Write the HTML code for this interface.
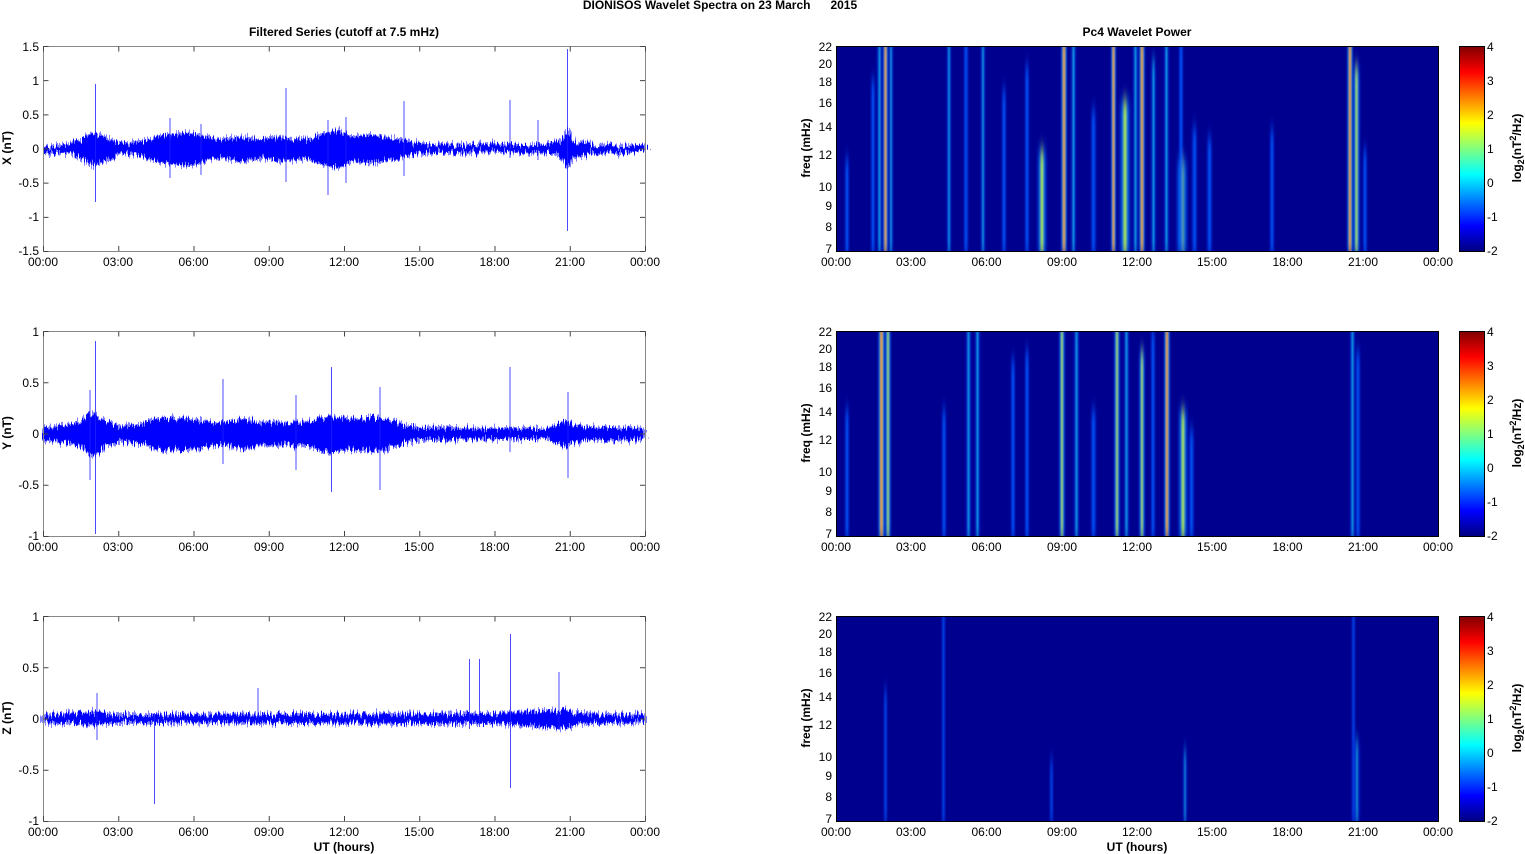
<!DOCTYPE html>
<html><head><meta charset="utf-8"><style>
body{margin:0;width:1525px;height:854px;background:#fff;overflow:hidden}
svg{display:block;font-family:"Liberation Sans",Arial,sans-serif;font-size:12px}
.b{font-weight:bold}
</style></head><body>
<svg width="1525" height="854" viewBox="0 0 1525 854" xmlns="http://www.w3.org/2000/svg">
<defs>
<filter id="jag" x="-2%" y="-60%" width="104%" height="220%">
<feTurbulence type="fractalNoise" baseFrequency="0.9 0.03" numOctaves="2" seed="3"/>
<feDisplacementMap in="SourceGraphic" scale="16" xChannelSelector="A" yChannelSelector="R"/>
</filter>
<filter id="bl" x="-50%" y="-20%" width="200%" height="140%"><feGaussianBlur stdDeviation="0.8 8"/></filter>
<linearGradient id="gC"><stop offset="0" stop-color="#0030ff" stop-opacity="0"/><stop offset=".35" stop-color="#0060ff" stop-opacity=".6"/><stop offset=".5" stop-color="#20e0e0"/><stop offset=".65" stop-color="#0060ff" stop-opacity=".6"/><stop offset="1" stop-color="#0030ff" stop-opacity="0"/></linearGradient>
<linearGradient id="gY"><stop offset="0" stop-color="#0030ff" stop-opacity="0"/><stop offset=".3" stop-color="#0090ff" stop-opacity=".7"/><stop offset=".5" stop-color="#d0ff30"/><stop offset=".7" stop-color="#0090ff" stop-opacity=".7"/><stop offset="1" stop-color="#0030ff" stop-opacity="0"/></linearGradient>
<linearGradient id="gR"><stop offset="0" stop-color="#0030ff" stop-opacity="0"/><stop offset=".3" stop-color="#10b0ff" stop-opacity=".7"/><stop offset=".44" stop-color="#ffd000"/><stop offset=".5" stop-color="#ff2000"/><stop offset=".56" stop-color="#ffd000"/><stop offset=".7" stop-color="#10b0ff" stop-opacity=".7"/><stop offset="1" stop-color="#0030ff" stop-opacity="0"/></linearGradient>
<linearGradient id="gB"><stop offset="0" stop-color="#0030ff" stop-opacity="0"/><stop offset=".5" stop-color="#0060ff"/><stop offset="1" stop-color="#0030ff" stop-opacity="0"/></linearGradient>
<linearGradient id="jet" x1="0" y1="0" x2="0" y2="1"><stop offset="0" stop-color="#800000"/><stop offset=".125" stop-color="#ff0000"/><stop offset=".375" stop-color="#ffff00"/><stop offset=".625" stop-color="#00ffff"/><stop offset=".875" stop-color="#0000ff"/><stop offset="1" stop-color="#000080"/></linearGradient>
<clipPath id="c1"><rect x="836" y="46" width="603" height="205"/></clipPath>
<clipPath id="c2"><rect x="836" y="331" width="603" height="205"/></clipPath>
<clipPath id="c3"><rect x="836" y="616" width="603" height="205"/></clipPath>
</defs>

<text x="720" y="9" text-anchor="middle" class="b" xml:space="preserve">DIONISOS Wavelet Spectra on 23 March      2015</text>
<text x="344" y="36" text-anchor="middle" class="b">Filtered Series (cutoff at 7.5 mHz)</text>
<text x="1137" y="36" text-anchor="middle" class="b">Pc4 Wavelet Power</text>

<!-- ===== Time series panel 1 ===== -->
<g fill="#0000ff" filter="url(#jag)">
<polygon points="43,145.5 68,144.5 80.6,138.5 93.2,132.5 105.7,136.5 118.3,143.5 135.8,142.5 155.9,136.5 168.4,134.5 188.5,132.5 206,136.5 218.6,139.5 243.7,136.5 258.7,139.5 281.3,136.5 306.4,139.5 326.4,132.5 339,130.5 351.5,136.5 369.1,134.5 384.1,136.5 404.2,140.5 419.3,143.5 444.3,144.5 544.7,144.5 562.2,140.5 567.2,128.5 574.8,140.5 594.8,144.5 645,145.5 645,151.8 594.8,152.9 574.8,157.3 567.2,170.5 562.2,157.3 544.7,152.9 444.3,152.9 419.3,154 404.2,157.3 384.1,161.7 369.1,163.9 351.5,161.7 339,168.3 326.4,166.1 306.4,158.4 281.3,161.7 258.7,158.4 243.7,161.7 218.6,158.4 206,161.7 188.5,166.1 168.4,163.9 155.9,161.7 135.8,155.1 118.3,154 105.7,161.7 93.2,166.1 80.6,159.5 68,152.9 43,151.8"/>
</g>
<g stroke="#2020ff" stroke-width="1" opacity=".8">
<line x1="95.5" y1="84" x2="95.5" y2="202"/><line x1="286" y1="88" x2="286" y2="182"/><line x1="328" y1="120" x2="328" y2="195"/><line x1="510" y1="100" x2="510" y2="158"/><line x1="567.5" y1="49" x2="567.5" y2="231"/><line x1="404" y1="101" x2="404" y2="176"/><line x1="346" y1="117" x2="346" y2="183"/><line x1="170" y1="118" x2="170" y2="178"/><line x1="201" y1="124" x2="201" y2="175"/><line x1="538" y1="120" x2="538" y2="160"/>
</g>
<rect x="43.5" y="46.5" width="602" height="205" fill="none" stroke="#888"/>

<!-- ===== Time series panel 2 ===== -->
<g fill="#0000ff" filter="url(#jag)">
<polygon points="43,427.5 68,425.5 83.1,419.5 93.2,411.5 103.2,419.5 118.3,425.5 143.3,423.5 155.9,419.5 181,417.5 198.5,419.5 218.6,423.5 243.7,419.5 261.2,421.5 281.3,423.5 306.4,421.5 331.5,415.5 344,419.5 369.1,417.5 384.1,417.5 401.7,423.5 419.3,427.5 494.5,428.5 544.7,428.5 567.2,421.5 577.3,426.5 645,428.5 645,439 577.3,441.2 567.2,446.7 544.7,439 494.5,439 419.3,440.1 401.7,444.5 384.1,451.1 369.1,451.1 344,448.9 331.5,453.3 306.4,446.7 281.3,444.5 261.2,446.7 243.7,448.9 218.6,444.5 198.5,448.9 181,451.1 155.9,448.9 143.3,444.5 118.3,442.3 103.2,448.9 93.2,457.7 83.1,448.9 68,442.3 43,440.1"/>
</g>
<g stroke="#2020ff" opacity=".8">
<line x1="95.5" y1="341" x2="95.5" y2="534"/><line x1="331.5" y1="367" x2="331.5" y2="492"/><line x1="380" y1="387" x2="380" y2="490"/><line x1="510" y1="367" x2="510" y2="452"/><line x1="223" y1="379" x2="223" y2="464"/><line x1="90" y1="390" x2="90" y2="480"/><line x1="568" y1="392" x2="568" y2="478"/><line x1="296" y1="395" x2="296" y2="470"/>
</g>
<rect x="43.5" y="331.5" width="602" height="205" fill="none" stroke="#888"/>

<!-- ===== Time series panel 3 ===== -->
<g fill="#0000ff" filter="url(#jag)">
<polygon points="43,714.5 93.2,711.5 118.3,714.5 469.4,713.5 494.5,713.5 567.2,709.5 577.3,713.5 645,714.5 645,723 577.3,724 567.2,729 494.5,724 469.4,724 118.3,723 93.2,725 43,723"/>
</g>
<g stroke="#2020ff" opacity=".8">
<line x1="154.5" y1="713" x2="154.5" y2="804"/><line x1="469.5" y1="659" x2="469.5" y2="729"/><line x1="479.5" y1="659" x2="479.5" y2="727"/><line x1="510.5" y1="634" x2="510.5" y2="788"/><line x1="559" y1="672" x2="559" y2="729"/><line x1="258" y1="688" x2="258" y2="724"/><line x1="97" y1="693" x2="97" y2="740"/>
</g>
<rect x="43.5" y="616.5" width="602" height="205" fill="none" stroke="#888"/>

<!-- ticks left -->
<g stroke="#444" fill="none">
<line x1="43" y1="248.5" x2="646" y2="248.5" stroke-width="5" stroke-dasharray="1 74.25"/>
<line x1="43" y1="49" x2="646" y2="49" stroke-width="5" stroke-dasharray="1 74.25"/>
<line x1="43" y1="533.5" x2="646" y2="533.5" stroke-width="5" stroke-dasharray="1 74.25"/>
<line x1="43" y1="334" x2="646" y2="334" stroke-width="5" stroke-dasharray="1 74.25"/>
<line x1="43" y1="818.5" x2="646" y2="818.5" stroke-width="5" stroke-dasharray="1 74.25"/>
<line x1="43" y1="619" x2="646" y2="619" stroke-width="5" stroke-dasharray="1 74.25"/>
<line x1="46" y1="46" x2="46" y2="252" stroke-width="5" stroke-dasharray="1 33.17"/>
<line x1="642.5" y1="46" x2="642.5" y2="252" stroke-width="5" stroke-dasharray="1 33.17"/>
<line x1="46" y1="331" x2="46" y2="537" stroke-width="5" stroke-dasharray="1 50.25"/>
<line x1="642.5" y1="331" x2="642.5" y2="537" stroke-width="5" stroke-dasharray="1 50.25"/>
<line x1="46" y1="616" x2="46" y2="822" stroke-width="5" stroke-dasharray="1 50.25"/>
<line x1="642.5" y1="616" x2="642.5" y2="822" stroke-width="5" stroke-dasharray="1 50.25"/>
</g>
<g text-anchor="end">
<text x="39" y="51">1.5</text><text x="39" y="85">1</text><text x="39" y="119">0.5</text><text x="39" y="153">0</text><text x="39" y="187">-0.5</text><text x="39" y="221">-1</text><text x="39" y="255">-1.5</text>
<text x="39" y="336">1</text><text x="39" y="387">0.5</text><text x="39" y="438">0</text><text x="39" y="489">-0.5</text><text x="39" y="540">-1</text>
<text x="39" y="621">1</text><text x="39" y="672">0.5</text><text x="39" y="723">0</text><text x="39" y="774">-0.5</text><text x="39" y="825">-1</text>
</g>
<g text-anchor="middle">
<g id="xl1"><text x="43" y="266">00:00</text><text x="118" y="266">03:00</text><text x="193.5" y="266">06:00</text><text x="269" y="266">09:00</text><text x="344" y="266">12:00</text><text x="419" y="266">15:00</text><text x="494.5" y="266">18:00</text><text x="570" y="266">21:00</text><text x="645" y="266">00:00</text></g>
<use href="#xl1" y="285"/><use href="#xl1" y="570"/>
<use href="#xl1" x="793"/><use href="#xl1" x="793" y="285"/><use href="#xl1" x="793" y="570"/>
</g>
<g class="b" text-anchor="middle">
<text transform="translate(11,148) rotate(-90)">X (nT)</text>
<text transform="translate(11,433) rotate(-90)">Y (nT)</text>
<text transform="translate(11,718) rotate(-90)">Z (nT)</text>
<text transform="translate(810,148) rotate(-90)">freq (mHz)</text>
<text transform="translate(810,433) rotate(-90)">freq (mHz)</text>
<text transform="translate(810,718) rotate(-90)">freq (mHz)</text>
<text x="344" y="851">UT (hours)</text><text x="1137" y="851">UT (hours)</text>
</g>

<!-- ===== Spectrogram 1 ===== -->
<rect x="836" y="46" width="603" height="205" fill="#00008f"/>
<g clip-path="url(#c1)"><g filter="url(#bl)">
<rect x="844" y="159" width="6" height="100" fill="url(#gB)"/>
<rect x="876" y="36" width="7" height="220" fill="url(#gC)"/>
<rect x="882" y="36" width="7" height="220" fill="url(#gR)"/>
<rect x="888" y="36" width="6" height="220" fill="url(#gC)"/>
<rect x="946" y="36" width="6" height="220" fill="url(#gC)"/>
<rect x="963" y="36" width="6" height="220" fill="url(#gB)"/>
<rect x="980" y="36" width="6" height="220" fill="url(#gC)"/>
<rect x="1024" y="66" width="6" height="190" fill="url(#gB)"/>
<rect x="1036" y="150" width="12" height="106" fill="url(#gY)"/>
<rect x="1060" y="36" width="8" height="220" fill="url(#gR)"/>
<rect x="1070" y="36" width="7" height="220" fill="url(#gC)"/>
<rect x="1110" y="36" width="7" height="220" fill="url(#gR)"/>
<rect x="1118" y="100" width="14" height="156" fill="url(#gY)"/>
<rect x="1132" y="36" width="7" height="220" fill="url(#gC)"/>
<rect x="1138" y="36" width="8" height="220" fill="url(#gR)"/>
<rect x="1163" y="36" width="7" height="220" fill="url(#gC)"/>
<rect x="1175" y="160" width="14" height="96" fill="url(#gY)"/>
<rect x="1191" y="128" width="7" height="128" fill="url(#gB)"/>
<rect x="1206" y="138" width="7" height="118" fill="url(#gB)"/>
<rect x="1269" y="130" width="6" height="126" fill="url(#gB)"/>
<rect x="1346" y="36" width="8" height="220" fill="url(#gR)"/>
<rect x="1352" y="66" width="9" height="190" fill="url(#gY)"/>
<rect x="1362" y="150" width="6" height="106" fill="url(#gB)"/>
<rect x="870" y="80" width="6" height="176" fill="url(#gB)"/>
<rect x="1001" y="90" width="6" height="166" fill="url(#gB)"/>
<rect x="1090" y="110" width="7" height="146" fill="url(#gB)"/>
<rect x="1150" y="60" width="7" height="196" fill="url(#gC)"/>
<rect x="1178" y="36" width="6" height="220" fill="url(#gB)"/>
</g></g>
<rect x="836.5" y="46.5" width="602" height="205" fill="none" stroke="#000"/>

<!-- ===== Spectrogram 2 ===== -->
<rect x="836" y="331" width="603" height="205" fill="#00008f"/>
<g clip-path="url(#c2)"><g filter="url(#bl)">
<rect x="844" y="410" width="6" height="130" fill="url(#gB)"/>
<rect x="877" y="321" width="9" height="220" fill="url(#gR)"/>
<rect x="884" y="321" width="8" height="220" fill="url(#gY)"/>
<rect x="941" y="410" width="6" height="130" fill="url(#gB)"/>
<rect x="965" y="321" width="7" height="220" fill="url(#gC)"/>
<rect x="974" y="321" width="7" height="220" fill="url(#gC)"/>
<rect x="1024" y="351" width="6" height="190" fill="url(#gB)"/>
<rect x="1058" y="321" width="8" height="220" fill="url(#gY)"/>
<rect x="1073" y="321" width="7" height="220" fill="url(#gC)"/>
<rect x="1090" y="410" width="7" height="130" fill="url(#gB)"/>
<rect x="1113" y="321" width="8" height="220" fill="url(#gY)"/>
<rect x="1123" y="321" width="7" height="220" fill="url(#gC)"/>
<rect x="1138" y="351" width="8" height="190" fill="url(#gY)"/>
<rect x="1163" y="321" width="8" height="220" fill="url(#gR)"/>
<rect x="1177" y="410" width="12" height="130" fill="url(#gY)"/>
<rect x="1188" y="430" width="7" height="110" fill="url(#gB)"/>
<rect x="1349" y="321" width="7" height="220" fill="url(#gC)"/>
<rect x="1355" y="351" width="6" height="190" fill="url(#gB)"/>
<rect x="1010" y="360" width="6" height="180" fill="url(#gB)"/>
<rect x="1150" y="330" width="6" height="210" fill="url(#gB)"/>
</g></g>
<rect x="836.5" y="331.5" width="602" height="205" fill="none" stroke="#000"/>

<!-- ===== Spectrogram 3 ===== -->
<rect x="836" y="616" width="603" height="205" fill="#00008f"/>
<g clip-path="url(#c3)"><g filter="url(#bl)" opacity=".85">
<rect x="883" y="690" width="5" height="135" fill="url(#gB)"/>
<rect x="941" y="606" width="5" height="220" fill="url(#gB)"/>
<rect x="1049" y="760" width="5" height="65" fill="url(#gB)"/>
<rect x="1182" y="750" width="6" height="75" fill="url(#gC)"/>
<rect x="1351" y="606" width="5" height="220" fill="url(#gB)"/>
<rect x="1353" y="740" width="8" height="85" fill="url(#gC)"/>
</g></g>
<rect x="836.5" y="616.5" width="602" height="205" fill="none" stroke="#000"/>

<!-- freq labels -->
<g text-anchor="end" id="fl1">
<text x="832" y="51">22</text><text x="832" y="68">20</text><text x="832" y="86">18</text><text x="832" y="107">16</text><text x="832" y="131">14</text><text x="832" y="159">12</text><text x="832" y="191">10</text><text x="832" y="210">9</text><text x="832" y="231">8</text><text x="832" y="253">7</text>
</g>
<use href="#fl1" y="285"/><use href="#fl1" y="570"/>

<!-- colorbars -->
<g id="cb1">
<rect x="1459.5" y="46.5" width="25" height="205" fill="url(#jet)" stroke="#000"/>
<text x="1487" y="51">4</text><text x="1487" y="85">3</text><text x="1487" y="119">2</text><text x="1487" y="153">1</text><text x="1487" y="187">0</text><text x="1487" y="221">-1</text><text x="1487" y="255">-2</text>
<text class="b" transform="translate(1521,148) rotate(-90)" text-anchor="middle">log<tspan font-size="9" dy="3">2</tspan><tspan dy="-3">(nT</tspan><tspan font-size="9" dy="-5">2</tspan><tspan dy="5">/Hz)</tspan></text>
</g>
<use href="#cb1" y="285"/><use href="#cb1" y="570"/>
</svg>
</body></html>
